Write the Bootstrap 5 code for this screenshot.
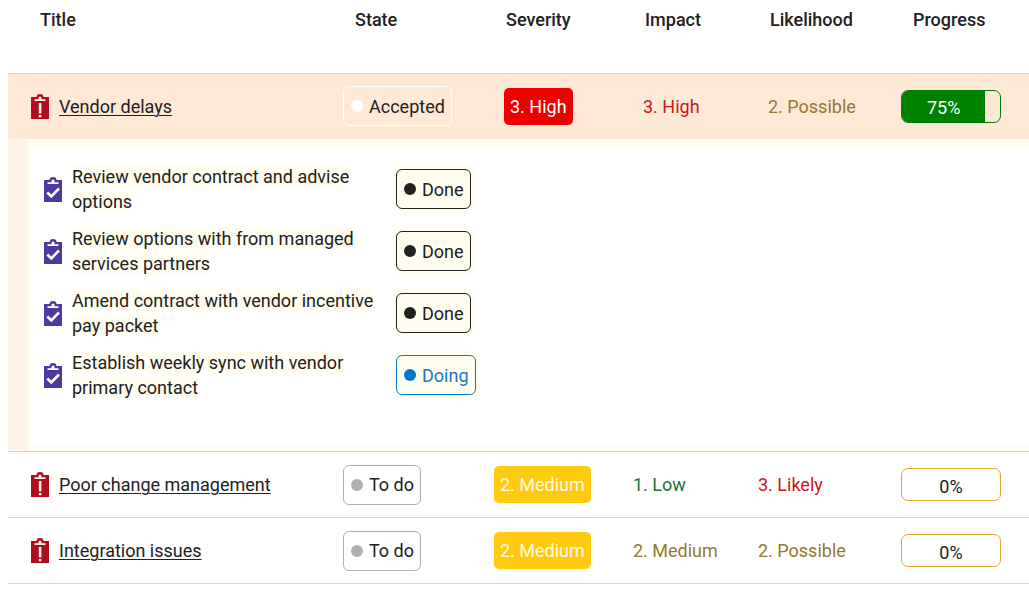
<!DOCTYPE html>
<html lang="en">
<head>
<meta charset="utf-8">
<meta name="viewport" content="width=device-width, initial-scale=1">
<title>Risk register</title>
<link href="https://cdn.jsdelivr.net/npm/bootstrap@5.3.0/dist/css/bootstrap.min.css" rel="stylesheet">
<style>
  body { font-family: Roboto, "Liberation Sans", sans-serif; font-size: 18px; line-height: 25px; color: #212121; background: #fff; }
  .risks { table-layout: fixed; color: inherit; }
  .risks th { height: 73px; padding: 7px 12px; font-weight: 500; vertical-align: top; }
  .risks th:first-child { padding-left: 32px; }
  .risk-row > td { height: 66px; padding: 0; vertical-align: middle; border-top: 1px solid #d9d6d0; }
  .risk-row > td:first-child { padding-left: 23px; }
  .risk-title { gap: 10px; }
  .risk-row.active > td { background: #fee8d6; border-top-color: #e6cfc0; }
  .risk-row.active .rating { padding-left: 10px; }
  .last-line { border-bottom: 1px solid #d9d6d0; }
  .risk-row a { color: #212121; text-decoration-thickness: 1px; text-underline-offset: 2px; }
  .col-state { width: 151px; } .col-sev { width: 139px; } .col-imp { width: 125px; }
  .col-like { width: 143px; } .col-prog { width: 128px; }
  .state-btn { height: 40px; padding: 0 6px 0 7px; border: 1px solid #212121; border-radius: 6px; background: transparent; color: #212121; gap: 6px; }
  .state-btn::before { content: ""; width: 12px; height: 12px; border-radius: 50%; background: #212121; }
  .state-accepted { border-color: #fff; }
  .state-accepted::before { background: #fff; }
  .state-todo { border-color: #b0b0b0; }
  .state-todo::before { background: #b0b0b0; }
  .state-doing { border-color: #0078d0; color: #1479c5; }
  .state-doing::before { background: #0078d0; }
  .sev { display: inline-block; padding: 6px; border-radius: 5px; color: #fff; }
  .sev-high { background: #ee0000; }
  .sev-medium { background: #ffca10; color: #fffbe0; }
  .t-high { color: #d01418; } .t-mid { color: #93792c; } .t-low { color: #17743a; }
  .meter { width: 100px; height: 33px; border: 1px solid #e3a72f; border-radius: 7px; background: transparent; font-size: 18px; }
  .meter-done { border-color: #008000; }
  .meter .progress-bar { background: #008000; font-size: 18px; padding-top: 2px; }
  .meter-zero { padding-top: 3px; }
  .detail { padding: 0; background: #fff3e8; }
  .detail-inner { margin-left: 20px; height: 312px; border: solid #fffdf0; border-width: 8px 0 6px 4px; background: #fff; padding: 11px 0 0 12px; }
  .tasks td { height: 62px; padding: 0; vertical-align: middle; }
  .task-icon { width: 28px; } .task-name { width: 318px; }
  .tinted { background: #fffdf0; }
  .tasks .state-btn { background: #fffdf0; box-shadow: 0 0 0 4px #fffdf0; margin-left: 6px; }
</style>
</head>
<body>
<svg class="d-none" xmlns="http://www.w3.org/2000/svg">
  <symbol id="risk" viewBox="0 0 18 25">
    <path d="M0 3h5.500Q5.500 0 9 0t3.500 3H18v22H0z" fill="#b10d20"/>
    <path d="M3.500 5.300h4V4Q7.500 2.500 9 2.500T10.500 4v1.300h4V7h-11zM7.800 9h2.600v10.500H7.800zM7.800 21h2.600v2.300H7.800z" fill="#fff0e8"/>
  </symbol>
  <symbol id="task" viewBox="0 0 18 25">
    <path d="M0 3h5.500Q5.500 0 9 0t3.500 3H18v22H0z" fill="#4f38a0"/>
    <path d="M3.500 5.300h4V4Q7.500 2.500 9 2.500T10.500 4v1.300h4V7h-11z" fill="#fff"/>
    <path d="M3.300 15.500l4 4 7.700-8" fill="none" stroke="#fff" stroke-width="2.600"/>
  </symbol>
</svg>
<main class="ps-2">
  <table class="risks w-100">
    <colgroup><col><col class="col-state"><col class="col-sev"><col class="col-imp"><col class="col-like"><col class="col-prog"></colgroup>
    <thead>
      <tr><th scope="col">Title</th><th scope="col">State</th><th scope="col">Severity</th><th scope="col">Impact</th><th scope="col">Likelihood</th><th scope="col">Progress</th></tr>
    </thead>
    <tbody>
      <tr class="risk-row active">
        <td><div class="risk-title d-flex align-items-center"><svg class="flex-shrink-0" width="18" height="25" aria-hidden="true"><use href="#risk"/></svg><a href="#">Vendor delays</a></div></td>
        <td><button type="button" class="state-btn state-accepted d-inline-flex align-items-center">Accepted</button></td>
        <td class="rating"><span class="sev sev-high">3. High</span></td>
        <td class="rating t-high">3. High</td>
        <td class="rating t-mid">2. Possible</td>
        <td><div class="progress meter meter-done" role="progressbar" aria-label="Vendor delays progress" aria-valuenow="75" aria-valuemin="0" aria-valuemax="100"><div class="progress-bar" style="width: 85%">75%</div></div></td>
      </tr>
      <tr>
        <td colspan="6" class="detail">
          <div class="detail-inner">
            <table class="tasks">
              <tr><td class="task-icon"><svg class="d-block" width="18" height="25" aria-hidden="true"><use href="#task"/></svg></td><td class="task-name"><span class="tinted">Review vendor contract and advise options</span></td><td><button type="button" class="state-btn d-inline-flex align-items-center">Done</button></td></tr>
              <tr><td class="task-icon"><svg class="d-block" width="18" height="25" aria-hidden="true"><use href="#task"/></svg></td><td class="task-name"><span class="tinted">Review options with from managed services partners</span></td><td><button type="button" class="state-btn d-inline-flex align-items-center">Done</button></td></tr>
              <tr><td class="task-icon"><svg class="d-block" width="18" height="25" aria-hidden="true"><use href="#task"/></svg></td><td class="task-name"><span class="tinted">Amend contract with vendor incentive pay packet</span></td><td><button type="button" class="state-btn d-inline-flex align-items-center">Done</button></td></tr>
              <tr><td class="task-icon"><svg class="d-block" width="18" height="25" aria-hidden="true"><use href="#task"/></svg></td><td class="task-name"><span class="tinted">Establish weekly sync with vendor primary contact</span></td><td><button type="button" class="state-btn state-doing d-inline-flex align-items-center">Doing</button></td></tr>
            </table>
          </div>
        </td>
      </tr>
      <tr class="risk-row">
        <td><div class="risk-title d-flex align-items-center"><svg class="flex-shrink-0" width="18" height="25" aria-hidden="true"><use href="#risk"/></svg><a href="#">Poor change management</a></div></td>
        <td><button type="button" class="state-btn state-todo d-inline-flex align-items-center">To do</button></td>
        <td><span class="sev sev-medium">2. Medium</span></td>
        <td class="t-low">1. Low</td>
        <td class="t-high">3. Likely</td>
        <td><div class="meter meter-zero d-flex align-items-center justify-content-center" role="progressbar" aria-label="Poor change management progress" aria-valuenow="0" aria-valuemin="0" aria-valuemax="100">0%</div></td>
      </tr>
      <tr class="risk-row last-line">
        <td><div class="risk-title d-flex align-items-center"><svg class="flex-shrink-0" width="18" height="25" aria-hidden="true"><use href="#risk"/></svg><a href="#">Integration issues</a></div></td>
        <td><button type="button" class="state-btn state-todo d-inline-flex align-items-center">To do</button></td>
        <td><span class="sev sev-medium">2. Medium</span></td>
        <td class="t-mid">2. Medium</td>
        <td class="t-mid">2. Possible</td>
        <td><div class="meter meter-zero d-flex align-items-center justify-content-center" role="progressbar" aria-label="Integration issues progress" aria-valuenow="0" aria-valuemin="0" aria-valuemax="100">0%</div></td>
      </tr>
    </tbody>
  </table>
</main>
<script src="https://cdn.jsdelivr.net/npm/bootstrap@5.3.0/dist/js/bootstrap.bundle.min.js"></script>
</body>
</html>
